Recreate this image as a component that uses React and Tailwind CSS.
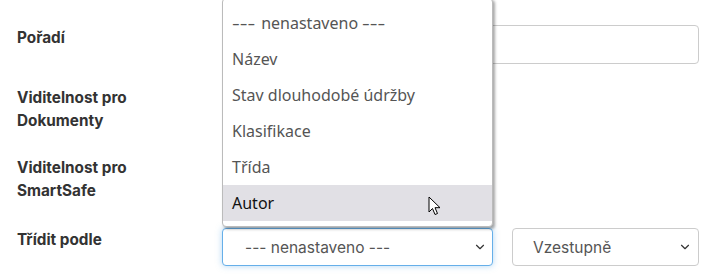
import { FiChevronDown } from "react-icons/fi";

const options = [
  "--- nenastaveno ---",
  "Název",
  "Stav dlouhodobé údržby",
  "Klasifikace",
  "Třída",
  "Autor",
];

function Cursor() {
  return (
    <svg
      className="absolute left-[428px] top-[196px]"
      width="14"
      height="21"
      viewBox="0 0 14 21"
    >
      <path
        d="M1 1 L1 16 L4.5 12.5 L7 18.5 L9.5 17.5 L7 11.7 L12 11.7 Z"
        fill="#fff"
        stroke="#000"
        strokeWidth="1"
        strokeLinejoin="round"
      />
    </svg>
  );
}

// the list draws its dashes longer than the select does
function OptionText({ text }) {
  if (!text.startsWith("---")) return <span>{text}</span>;
  return (
    <span>
      <span className="inline-block w-[25px] scale-x-150 origin-left">---</span>{" "}
      nenastaveno{" "}
      <span className="inline-block w-[25px] scale-x-150 origin-left">---</span>
    </span>
  );
}

function Select({ value, focused, className }) {
  return (
    <div
      className={`h-[38px] rounded-[4px] border bg-white flex items-center justify-between text-[15.5px] text-[#555] ${
        focused
          ? "border-[#66afe9] shadow-[0_0_6px_rgba(102,175,233,0.5)]"
          : "border-[#ccc]"
      } ${className}`}
    >
      <span>{value}</span>
      <FiChevronDown className="text-[#333] text-[14px]" />
    </div>
  );
}

export default function App() {
  return (
    <div className="relative w-[717px] h-[276px] bg-white overflow-hidden font-['Inter',sans-serif]">
      <div className="pl-[17px] pt-[25px] text-[15.3px] font-bold text-[#333] leading-[23px]">
        <div className="flex h-[39px]">
          <div className="w-[205px] mt-[1px]">Pořadí</div>
          <div className="w-[477px] h-[39px] border border-[#ccc] rounded-[4px]" />
        </div>
        <div className="mt-[22px] h-[46px] w-[205px]">
          Viditelnost pro
          <br />
          Dokumenty
        </div>
        <div className="mt-[24px] h-[46px] w-[205px]">
          Viditelnost pro
          <br />
          SmartSafe
        </div>
        <div className="mt-[26px] flex">
          <div className="w-[205px]">Třídit podle</div>
          <div className="flex gap-[19px] font-normal">
            <Select
              value="--- nenastaveno ---"
              focused
              className="w-[271px] pl-[22px] pr-[5px]"
            />
            <Select value="Vzestupně" className="w-[187px] pl-[20px] pr-[6px]" />
          </div>
        </div>
      </div>

      <div className="absolute left-[222px] -top-[2px] w-[271px] h-[229px] bg-white border border-[#bbb] rounded-[4px] shadow-[2px_2px_3px_rgba(0,0,0,0.35)] pt-[6px] font-['Noto_Sans',sans-serif] text-[16px]">
        {options.map((o) => (
          <div
            key={o}
            className={`h-[36px] flex items-center pl-[9px] ${
              o === "Autor" ? "bg-[#e1e0e5] text-[#111]" : "text-[#555]"
            }`}
          >
            <OptionText text={o} />
          </div>
        ))}
      </div>
      <Cursor />
    </div>
  );
}
